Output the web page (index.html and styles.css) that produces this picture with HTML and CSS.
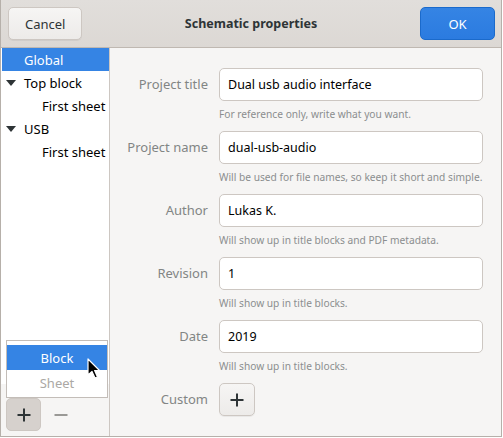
FILE: index.html
```html
<!DOCTYPE html>
<html>
<head>
<meta charset="utf-8">
<link rel="stylesheet" href="styles.css">
</head>
<body>
<div class="window">
  <header class="headerbar">
    <button class="btn btn-cancel">Cancel</button>
    <div class="title">Schematic properties</div>
    <button class="btn btn-ok">OK</button>
  </header>
  <div class="content">
    <aside class="sidebar">
      <ul class="tree">
        <li class="row selected"><span class="indent1"></span>Global</li>
        <li class="row"><span class="arrow"></span>Top block</li>
        <li class="row"><span class="indent2"></span>First sheet</li>
        <li class="row"><span class="arrow"></span>USB</li>
        <li class="row"><span class="indent2"></span>First sheet</li>
      </ul>
      <div class="toolbar">
        <button class="tool-btn pressed" aria-label="Add">
          <svg width="16" height="16" viewBox="0 0 16 16"><path d="M8 1.5v13M1.5 8h13" stroke="#2e3436" stroke-width="2" fill="none"/></svg>
        </button>
        <button class="tool-btn" aria-label="Remove">
          <svg width="16" height="16" viewBox="0 0 16 16"><path d="M1.5 8h13" stroke="#9a9996" stroke-width="2" fill="none"/></svg>
        </button>
      </div>
      <div class="popover">
        <div class="pop-item active">Block</div>
        <div class="pop-item disabled">Sheet</div>
      </div>
      <svg class="cursor" width="14" height="22" viewBox="0 0 14 22">
        <path d="M1 1 L1 17 L5 13.5 L8 20 L10.5 19 L7.6 12.6 L12.5 12.5 Z" fill="#000" stroke="#fff" stroke-width="1.2" stroke-linejoin="round"/>
      </svg>
    </aside>
    <main class="form">
      <label class="label">Project title</label>
      <div class="field">
        <div class="entry">Dual usb audio interface</div>
        <div class="hint">For reference only, write what you want.</div>
      </div>
      <label class="label">Project name</label>
      <div class="field">
        <div class="entry">dual-usb-audio</div>
        <div class="hint">Will be used for file names, so keep it short and simple.</div>
      </div>
      <label class="label">Author</label>
      <div class="field">
        <div class="entry">Lukas K.</div>
        <div class="hint">Will show up in title blocks and PDF metadata.</div>
      </div>
      <label class="label">Revision</label>
      <div class="field">
        <div class="entry">1</div>
        <div class="hint">Will show up in title blocks.</div>
      </div>
      <label class="label">Date</label>
      <div class="field">
        <div class="entry">2019</div>
        <div class="hint">Will show up in title blocks.</div>
      </div>
      <label class="label label-custom">Custom</label>
      <div class="field">
        <button class="add-btn" aria-label="Add custom">
          <svg width="16" height="16" viewBox="0 0 16 16"><path d="M8 1.5v13M1.5 8h13" stroke="#2e3436" stroke-width="2" fill="none"/></svg>
        </button>
      </div>
    </main>
  </div>
</div>
</body>
</html>
```
FILE: styles.css
```css
* { box-sizing: border-box; }
html, body {
  margin: 0;
  padding: 0;
  background: #ffffff;
}
body {
  font-family: "Noto Sans", "DejaVu Sans", sans-serif;
  font-size: 13px;
  color: #2e3436;
}
.window {
  width: 502px;
  height: 437px;
  border: 1px solid #b6b0aa;
  border-top: none;
  display: flex;
  flex-direction: column;
  background: #f6f5f4;
  overflow: hidden;
}
.headerbar {
  height: 48px;
  flex: none;
  display: flex;
  align-items: center;
  justify-content: space-between;
  padding: 0 6px 0 7px;
  background: linear-gradient(#e1dedb, #dcd8d4);
  border-bottom: 1px solid #bfb8b1;
}
.btn {
  font-family: inherit;
  font-size: 13px;
  height: 33px;
  border-radius: 5px;
  padding: 0 16px;
  cursor: default;
}
.btn-cancel {
  width: 74px;
  color: #2e3436;
  background: linear-gradient(#f6f5f4, #edebe9);
  border: 1px solid #cdc7c2;
  box-shadow: 0 1px rgba(0,0,0,0.05);
}
.btn-ok {
  width: 75px;
  color: #ffffff;
  background: linear-gradient(#3584e4, #2b7be0);
  border: 1px solid #1b6acb;
}
.title {
  font-weight: bold;
  font-size: 12.5px;
  color: #2e3436;
}
.content {
  flex: 1;
  display: flex;
  min-height: 0;
}
.sidebar {
  position: relative;
  width: 109px;
  flex: none;
  display: flex;
  flex-direction: column;
  border-right: 1px solid #cdc7c2;
  background: #f6f5f4;
}
.tree {
  list-style: none;
  margin: 0;
  padding: 0;
  flex: 1;
  background: #ffffff;
  padding-left: 1px;
}
.row {
  height: 23px;
  display: flex;
  align-items: center;
  color: #000000;
  white-space: nowrap;
}
.row.selected {
  background: #3584e4;
  color: #ffffff;
}
.indent1 { width: 22px; flex: none; }
.indent2 { width: 40px; flex: none; }
.arrow {
  width: 22px;
  flex: none;
  position: relative;
  height: 10px;
}
.arrow::before {
  content: "";
  position: absolute;
  left: 4px;
  top: 2px;
  border-left: 5px solid transparent;
  border-right: 5px solid transparent;
  border-top: 6px solid #2e3436;
}
.toolbar {
  height: 52px;
  flex: none;
  display: flex;
  align-items: flex-end;
  gap: 2px;
  padding: 0 0 5px 5px;
}
.tool-btn {
  width: 35px;
  height: 33px;
  border: none;
  border-radius: 5px;
  background: transparent;
  display: flex;
  align-items: center;
  justify-content: center;
  padding: 0;
}
.tool-btn.pressed {
  background: #d6d1cd;
  border: 1px solid #cdc7c2;
}
.popover {
  position: absolute;
  left: 5px;
  top: 292px;
  width: 102px;
  height: 58px;
  background: #ffffff;
  border: 1px solid #c3bdb8;
  padding-top: 4px;
}
.pop-item {
  height: 25px;
  display: flex;
  align-items: center;
  justify-content: center;
}
.pop-item.active {
  background: #3584e4;
  color: #ffffff;
}
.pop-item.disabled {
  color: #aba8a4;
}
.cursor {
  position: absolute;
  left: 86px;
  top: 310px;
}
.form {
  flex: 1;
  display: grid;
  grid-template-columns: 98px 264px;
  grid-auto-rows: 63px;
  column-gap: 11px;
  padding: 20px 0 0 0;
  align-content: start;
}
.label {
  text-align: right;
  color: #828584;
  height: 33px;
  line-height: 33px;
  white-space: nowrap;
}
.field {
  display: flex;
  flex-direction: column;
}
.entry {
  height: 33px;
  border: 1px solid #cdc7c2;
  border-radius: 5px;
  background: #ffffff;
  padding: 0 8px;
  line-height: 31px;
  font-size: 12.5px;
  color: #000000;
  flex: none;
}
.hint {
  margin-top: 6px;
  font-size: 10.2px;
  color: #8b8e8f;
  white-space: nowrap;
}
.add-btn {
  width: 36px;
  height: 33px;
  border: 1px solid #cdc7c2;
  border-radius: 5px;
  background: linear-gradient(#f6f5f4, #edebe9);
  box-shadow: 0 1px rgba(0,0,0,0.05);
  display: flex;
  align-items: center;
  justify-content: center;
  padding: 0;
}
```
